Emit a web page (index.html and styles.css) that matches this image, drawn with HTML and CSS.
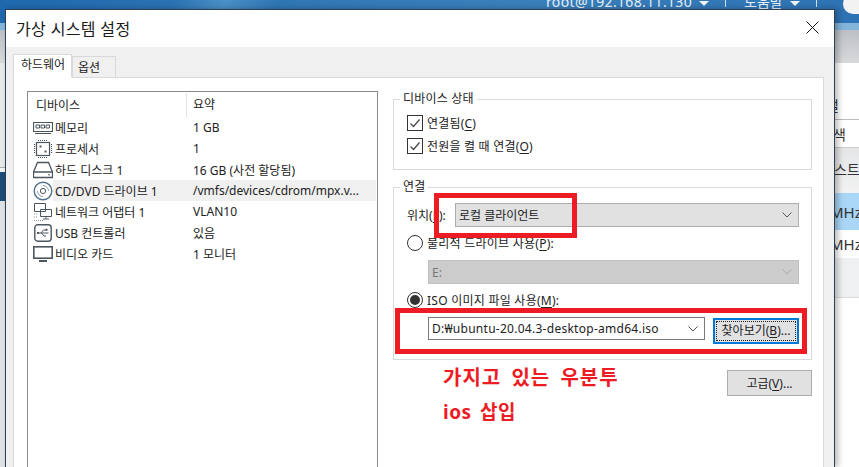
FILE: index.html
```html
<!DOCTYPE html>
<html lang="ko">
<head>
<meta charset="utf-8">
<title>가상 시스템 설정</title>
<link rel="stylesheet" href="styles.css">
</head>
<body>
<div class="backdrop">
  <div class="topbar">
    <span class="top-user">root@192.168.11.130</span><span class="caret"></span>
    <span class="top-sep sep-a"></span>
    <span class="top-help">도움말</span><span class="caret"></span>
    <span class="top-sep sep-b"></span>
    <span class="pill"></span>
  </div>
  <div class="band-light"></div>
  <div class="band-gray"></div>
  <div class="bg-row r-title"><span>설</span></div>
  <div class="bg-row r-search"><span>색</span></div>
  <div class="bg-row r-head"><span>스트</span></div>
  <div class="bg-row r-sel"><span>MHz</span></div>
  <div class="bg-row r-plain"><span>MHz</span></div>
  <div class="bg-row r-gray"></div>
  <div class="bg-row r-rest"></div>
  <div class="left-strip"></div>
</div>

<section class="dialog">
  <header class="titlebar">
    <h1 class="title">가상 시스템 설정</h1>
    <svg class="close" width="13" height="13" viewBox="0 0 13 13"><path d="M.5.5l12 12M12.500.5l-12 12" stroke="#111" fill="none"/></svg>
  </header>
  <div class="tabs">
    <div class="tab tab-active">하드웨어</div>
    <div class="tab">옵션</div>
  </div>
  <div class="panel">
    <div class="devices">
      <div class="dev-head"><div class="hd-name">디바이스</div><div class="hd-sum">요약</div></div>
      <div class="dev-row">
        <svg class="ico" width="20" height="14" viewBox="0 0 20 14"><path d="M.5 1.500h19v9h-19zM2 12.500h16" fill="none" stroke="#4c565f" stroke-width="1.200"/><path d="M3 4h3.500v3H3zM8 4h3.500v3H8zM13 4h3.500v3H13z" fill="none" stroke="#4c565f"/></svg>
        <span class="name">메모리</span><span class="sum">1 GB</span>
      </div>
      <div class="dev-row">
        <svg class="ico" width="20" height="20" viewBox="0 0 20 20"><rect x="3.500" y="3.500" width="13" height="13" fill="none" stroke="#4c565f" stroke-width="1.200"/><path d="M5 1.500h10M5 18.500h10M1.500 5v10M18.500 5v10" stroke="#4c565f" stroke-width="1.200" stroke-dasharray="1 1" fill="none"/><path d="M6.500 6.500h2v2h-2zM11.500 11.500h2v2h-2z" fill="#4c565f"/></svg>
        <span class="name">프로세서</span><span class="sum">1</span>
      </div>
      <div class="dev-row">
        <svg class="ico" width="20" height="18" viewBox="0 0 20 18"><path d="M4.500 1.500h11L19.500 11v5.500H.5V11zM.5 11h19" fill="none" stroke="#4c565f" stroke-width="1.300"/><path d="M15 13.800h2" stroke="#4c565f"/></svg>
        <span class="name">하드 디스크 1</span><span class="sum">16 GB (사전 할당됨)</span>
      </div>
      <div class="dev-row dev-selected">
        <svg class="ico" width="20" height="20" viewBox="0 0 20 20"><circle cx="10" cy="10" r="8.800" fill="none" stroke="#4f6f8c" stroke-width="1.400"/><circle cx="10" cy="10" r="2.600" fill="none" stroke="#4c565f"/><path d="M10 4.500a5.500 5.500 0 0 1 5.500 5.500M10 15.500A5.500 5.500 0 0 1 4.500 10" fill="none" stroke="#8aa0b2"/></svg>
        <span class="name">CD/DVD 드라이브 1</span><span class="sum">/vmfs/devices/cdrom/mpx.v...</span>
      </div>
      <div class="dev-row">
        <svg class="ico" width="20" height="20" viewBox="0 0 20 20"><path d="M1.500 1.500h11v8h-11zM7.500 7.500h11v7h-11zM13 14.500v2M10 17h6" fill="#fff" stroke="#4c565f"/><path d="M1 12h4M1 15h4M1 18.500h10" stroke="#8d959d" stroke-dasharray="1 1" fill="none"/></svg>
        <span class="name">네트워크 어댑터 1</span><span class="sum">VLAN10</span>
      </div>
      <div class="dev-row">
        <svg class="ico ico-usb" width="18" height="18" viewBox="0 0 18 18"><rect x=".8" y=".8" width="16.400" height="16.400" rx="3" fill="none" stroke="#4c565f" stroke-width="1.400"/><path d="M3.500 9h11M7 9l2.500-3H12M7.500 9l2.500 3h2" fill="none" stroke="#4c565f"/><path d="M11.500 4.800h2v2h-2zM3 8h2v2H3z" fill="#4c565f"/></svg>
        <span class="name">USB 컨트롤러</span><span class="sum">있음</span>
      </div>
      <div class="dev-row">
        <svg class="ico" width="20" height="16" viewBox="0 0 20 16"><rect x=".8" y=".8" width="18.400" height="11.400" fill="none" stroke="#4c565f" stroke-width="1.600"/><path d="M6 15h8" stroke="#4c565f" stroke-width="2"/></svg>
        <span class="name">비디오 카드</span><span class="sum">1 모니터</span>
      </div>
    </div>

    <div class="settings">
      <fieldset class="group g-status">
        <legend>디바이스 상태</legend>
        <label class="check-row"><span class="check"><svg width="14" height="14" viewBox="0 0 14 14"><path d="M2.500 7.500l3 3 6-7" fill="none" stroke="#444" stroke-width="1.200"/></svg></span>연결됨(<u>C</u>)</label>
        <label class="check-row"><span class="check"><svg width="14" height="14" viewBox="0 0 14 14"><path d="M2.500 7.500l3 3 6-7" fill="none" stroke="#444" stroke-width="1.200"/></svg></span>전원을 켤 때 연결(<u>O</u>)</label>
      </fieldset>
      <fieldset class="group g-conn">
        <legend>연결</legend>
        <div class="loc-row">
          <span class="loc-label">위치(<u>L</u>):</span>
          <div class="select sel-loc"><span>로컬 클라이언트</span><svg class="chev" width="10" height="6" viewBox="0 0 10 6"><path d="M.5.5L5 5 9.500.5" fill="none" stroke="#555"/></svg></div>
        </div>
        <div class="radio-row"><span class="radio"></span>물리적 드라이브 사용(<u>P</u>):</div>
        <div class="select sel-off"><span>E:</span><svg class="chev" width="10" height="6" viewBox="0 0 10 6"><path d="M.5.5L5 5 9.500.5" fill="none" stroke="#a8a8a8"/></svg></div>
        <div class="radio-row radio-iso"><span class="radio radio-on"></span>ISO 이미지 파일 사용(<u>M</u>):</div>
        <div class="iso-row">
          <div class="select sel-iso"><span>D:₩ubuntu-20.04.3-desktop-amd64.iso</span><svg class="chev" width="10" height="6" viewBox="0 0 10 6"><path d="M.5.5L5 5 9.500.5" fill="none" stroke="#555"/></svg></div>
          <button class="btn btn-focus" type="button"><span>찾아보기(<u>B</u>)...</span></button>
        </div>
      </fieldset>
      <div class="adv-row"><button class="btn btn-adv" type="button">고급(<u>V</u>)...</button></div>
    </div>
  </div>
</section>

<div class="mark mark-a"></div>
<div class="mark mark-b"></div>
<div class="note note-a">가지고 있는 우분투</div>
<div class="note note-b">ios 삽입</div>
</body>
</html>
```
FILE: styles.css
```css
* { box-sizing: border-box; }
html, body { margin: 0; height: 100%; }
body {
  position: relative;
  width: 859px;
  height: 467px;
  overflow: hidden;
  background: #fff;
  font-family: "Noto Sans", "Noto Sans CJK KR", sans-serif;
  font-size: 12px;
  color: #222;
}
u { text-underline-offset: 2px; }

/* backdrop page behind the dialog */
.backdrop {
  position: absolute;
  inset: 0;
  overflow: hidden;
  display: flex;
  flex-direction: column;
  background: #fff;
}
.topbar {
  height: 23px;
  flex: none;
  position: relative;
  display: flex;
  align-items: flex-start;
  background: linear-gradient(105deg, #1f68ad 0, #2a72b3 20%, #4a8fc6 26%, #2f76b4 32%, #3a80bb 60%, #2d72b3 100%);
  color: #e8f1f8;
  font-size: 14px;
  line-height: 14px;
  padding-left: 546px;
}
.top-user { margin-top: -5px; white-space: nowrap; letter-spacing: .35px; }
.top-help { margin-top: -5px; white-space: nowrap; margin-left: 18px; }
.caret {
  width: 0; height: 0;
  margin: 1px 0 0 7px;
  border-left: 5px solid transparent;
  border-right: 5px solid transparent;
  border-top: 5px solid #eef4f9;
}
.top-sep { width: 1px; height: 7px; background: #cfe0ee; margin-left: 16px; }
.pill {
  position: absolute;
  left: 843px; top: -6px;
  width: 40px; height: 20px;
  background: #f2f2f2;
  border-radius: 10px;
}
.band-light { height: 7px; flex: none; background: #83b4da; }
.band-gray { height: 33px; flex: none; background: linear-gradient(#bcc0c5, #d8d9db); }
.bg-row {
  flex: none;
  padding-left: 826px;
  white-space: nowrap;
  display: flex;
  align-items: center;
  color: #333;
  font-size: 14px;
}
.r-title { height: 57px; background: #fff; border-bottom: 1px solid #bbb; padding-top: 27px; }
.r-search { height: 28px; background: #fff; border-bottom: 1px solid #ccc; padding-left: 833px; }
.r-head { height: 45px; background: linear-gradient(#e4e6e8, #f2f2f2); padding: 0 0 3px 834px; }
.r-sel { height: 37px; background: #a9d6f6; font-size: 15px; padding-left: 830px; }
.r-plain { height: 28px; background: #fff; font-size: 15px; padding-left: 830px; }
.r-gray { height: 40px; background: #eef0f2; border-bottom: 1px solid #ddd; }
.r-rest { flex: 1; background: #fff; }
.left-strip {
  position: absolute;
  left: 0; top: 63px;
  width: 6px; height: 404px;
  background: linear-gradient(#e6e8ea 0 104px, #a9adb1 104px 105px, #f2f3f4 105px 109px, #1d4a78 109px 138px, #dfe2e5 138px);
}

/* dialog window */
.dialog {
  position: absolute;
  left: 5px; top: 9px;
  width: 830px;
  height: 458px;
  display: flex;
  flex-direction: column;
  background: #f0f0f0;
  border: 1px solid #2f4052;
  border-bottom: 0;
  box-shadow: 3px 0 6px rgba(0,0,0,.28);
}
.titlebar {
  flex: none;
  height: 37px;
  background: #fff;
  display: flex;
  align-items: center;
  justify-content: space-between;
  padding: 0 15px 2px 10px;
}
.title {
  margin: 0;
  font-size: 16px;
  font-weight: 400;
  letter-spacing: .35px;
  color: #1a1a1a;
}
.tabs {
  flex: none;
  height: 31px;
  display: flex;
  align-items: flex-end;
  padding-left: 7px;
  margin-bottom: -1px;
  position: relative;
  z-index: 1;
}
.tab {
  height: 22px;
  width: 44px;
  border: 1px solid #d9d9d9;
  background: #f0f0f0;
  font-size: 12px;
  padding-left: 5px;
  line-height: 21px;
}
.tab-active {
  height: 24px;
  width: 59px;
  background: #fff;
  border-bottom-color: #fff;
  padding-left: 7px;
  line-height: 19px;
}
.panel {
  flex: 1;
  min-height: 0;
  overflow: hidden;
  margin: 0 10px 0 7px;
  background: #fff;
  border: 1px solid #d9d9d9;
  border-bottom: 0;
  display: flex;
  padding: 13px 0 0 13px;
  gap: 15px;
}

/* device list */
.devices {
  flex: none;
  width: 351px;
  border: 1px solid #8a8a8a;
  border-bottom: 0;
  padding-top: 1px;
  font-size: 12px;
}
.dev-head {
  height: 24px;
  display: flex;
  align-items: center;
}
.hd-name { width: 158px; padding-left: 8px; }
.hd-sum {
  width: 190px;
  height: 24px;
  line-height: 24px;
  padding-left: 6px;
  border-left: 1px solid #e2e2e2;
}
.dev-row {
  height: 21px;
  display: flex;
  align-items: center;
  position: relative;
  margin-right: 1px;
  white-space: nowrap;
}
.ico { position: absolute; left: 5px; top: 50%; transform: translateY(-50%); }
.ico-usb { left: 6px; }
.name { width: 138px; margin-left: 27px; flex: none; }
.dev-selected { margin-left: 25px; background: #f0f0f0; }
.dev-selected .ico { left: -20px; }
.dev-selected .name { margin-left: 2px; }

/* right column */
.settings { width: 419px; flex: none; }
.group {
  margin: 0;
  padding: 0 12px 0 13px;
  border: 1px solid #d9d9d9;
  min-width: 0;
}
.group legend {
  margin-left: -7px;
  padding: 0 3px;
  height: 16px;
  line-height: 15px;
  font-size: 12px;
  letter-spacing: .2px;
}
.g-status { height: 79px; margin-bottom: 9px; padding-top: 8px; }
.g-conn { height: 181px; padding-top: 8px; }
.check-row {
  display: flex;
  align-items: center;
  height: 16px;
  margin-bottom: 7px;
  letter-spacing: .2px;
  white-space: nowrap;
}
.check {
  width: 16px; height: 16px;
  margin-right: 4px;
  border: 1px solid #333;
  background: #fff;
  display: flex;
  align-items: center;
  justify-content: center;
  flex: none;
}
.loc-row { display: flex; align-items: center; height: 24px; }
.loc-label { width: 48px; flex: none; white-space: nowrap; }
.select {
  display: flex;
  align-items: center;
  justify-content: space-between;
  padding: 0 6px 0 3px;
  white-space: nowrap;
}
.sel-loc { flex: 1; height: 24px; background: #e1e1e1; border: 1px solid #adadad; }
.radio-row {
  display: flex;
  align-items: center;
  height: 16px;
  margin-top: 8px;
  letter-spacing: .25px;
  white-space: nowrap;
}
.radio {
  width: 16px; height: 16px;
  margin-right: 4px;
  border: 1px solid #333;
  border-radius: 50%;
  background: #fff;
  flex: none;
  position: relative;
}
.radio-on::after {
  content: "";
  position: absolute;
  inset: 2px;
  border-radius: 50%;
  background: #333;
}
.sel-off {
  margin: 9px 0 0 21px;
  height: 24px;
  background: #ccc;
  border: 1px solid #bfbfbf;
  color: #777;
}
.iso-row { display: flex; align-items: flex-start; margin: 9px 0 0 21px; gap: 8px; }
.sel-iso {
  width: 277px;
  height: 23px;
  background: #fff;
  border: 1px solid #7a7a7a;
  letter-spacing: .27px;
}
.btn {
  font: inherit;
  color: #222;
  background: #e1e1e1;
  border: 1px solid #adadad;
  padding: 0;
  margin: 0;
  white-space: nowrap;
}
.btn-focus {
  width: 86px;
  height: 26px;
  margin-top: 1px;
  border: 2px solid #0078d7;
  padding: 1px;
}
.btn-focus span {
  display: block;
  height: 100%;
  line-height: 18px;
  border: 1px dotted #222;
}
.adv-row { display: flex; justify-content: flex-end; margin-top: 10px; }
.btn-adv { width: 85px; height: 26px; }

/* hand-drawn red annotations */
.mark { position: absolute; border: 5px solid #ed1c24; }
.mark-a { left: 434px; top: 193px; width: 143px; height: 45px; }
.mark-b { left: 395px; top: 308px; width: 412px; height: 46px; }
.note {
  position: absolute;
  left: 443px;
  color: #ed1c24;
  font-weight: 700;
  font-size: 19px;
  line-height: 24px;
  letter-spacing: .5px;
  word-spacing: 3px;
  white-space: nowrap;
}
.note-a { top: 366px; font-size: 20px; letter-spacing: 1px; word-spacing: 4px; }
.note-b { top: 400px; }
```
